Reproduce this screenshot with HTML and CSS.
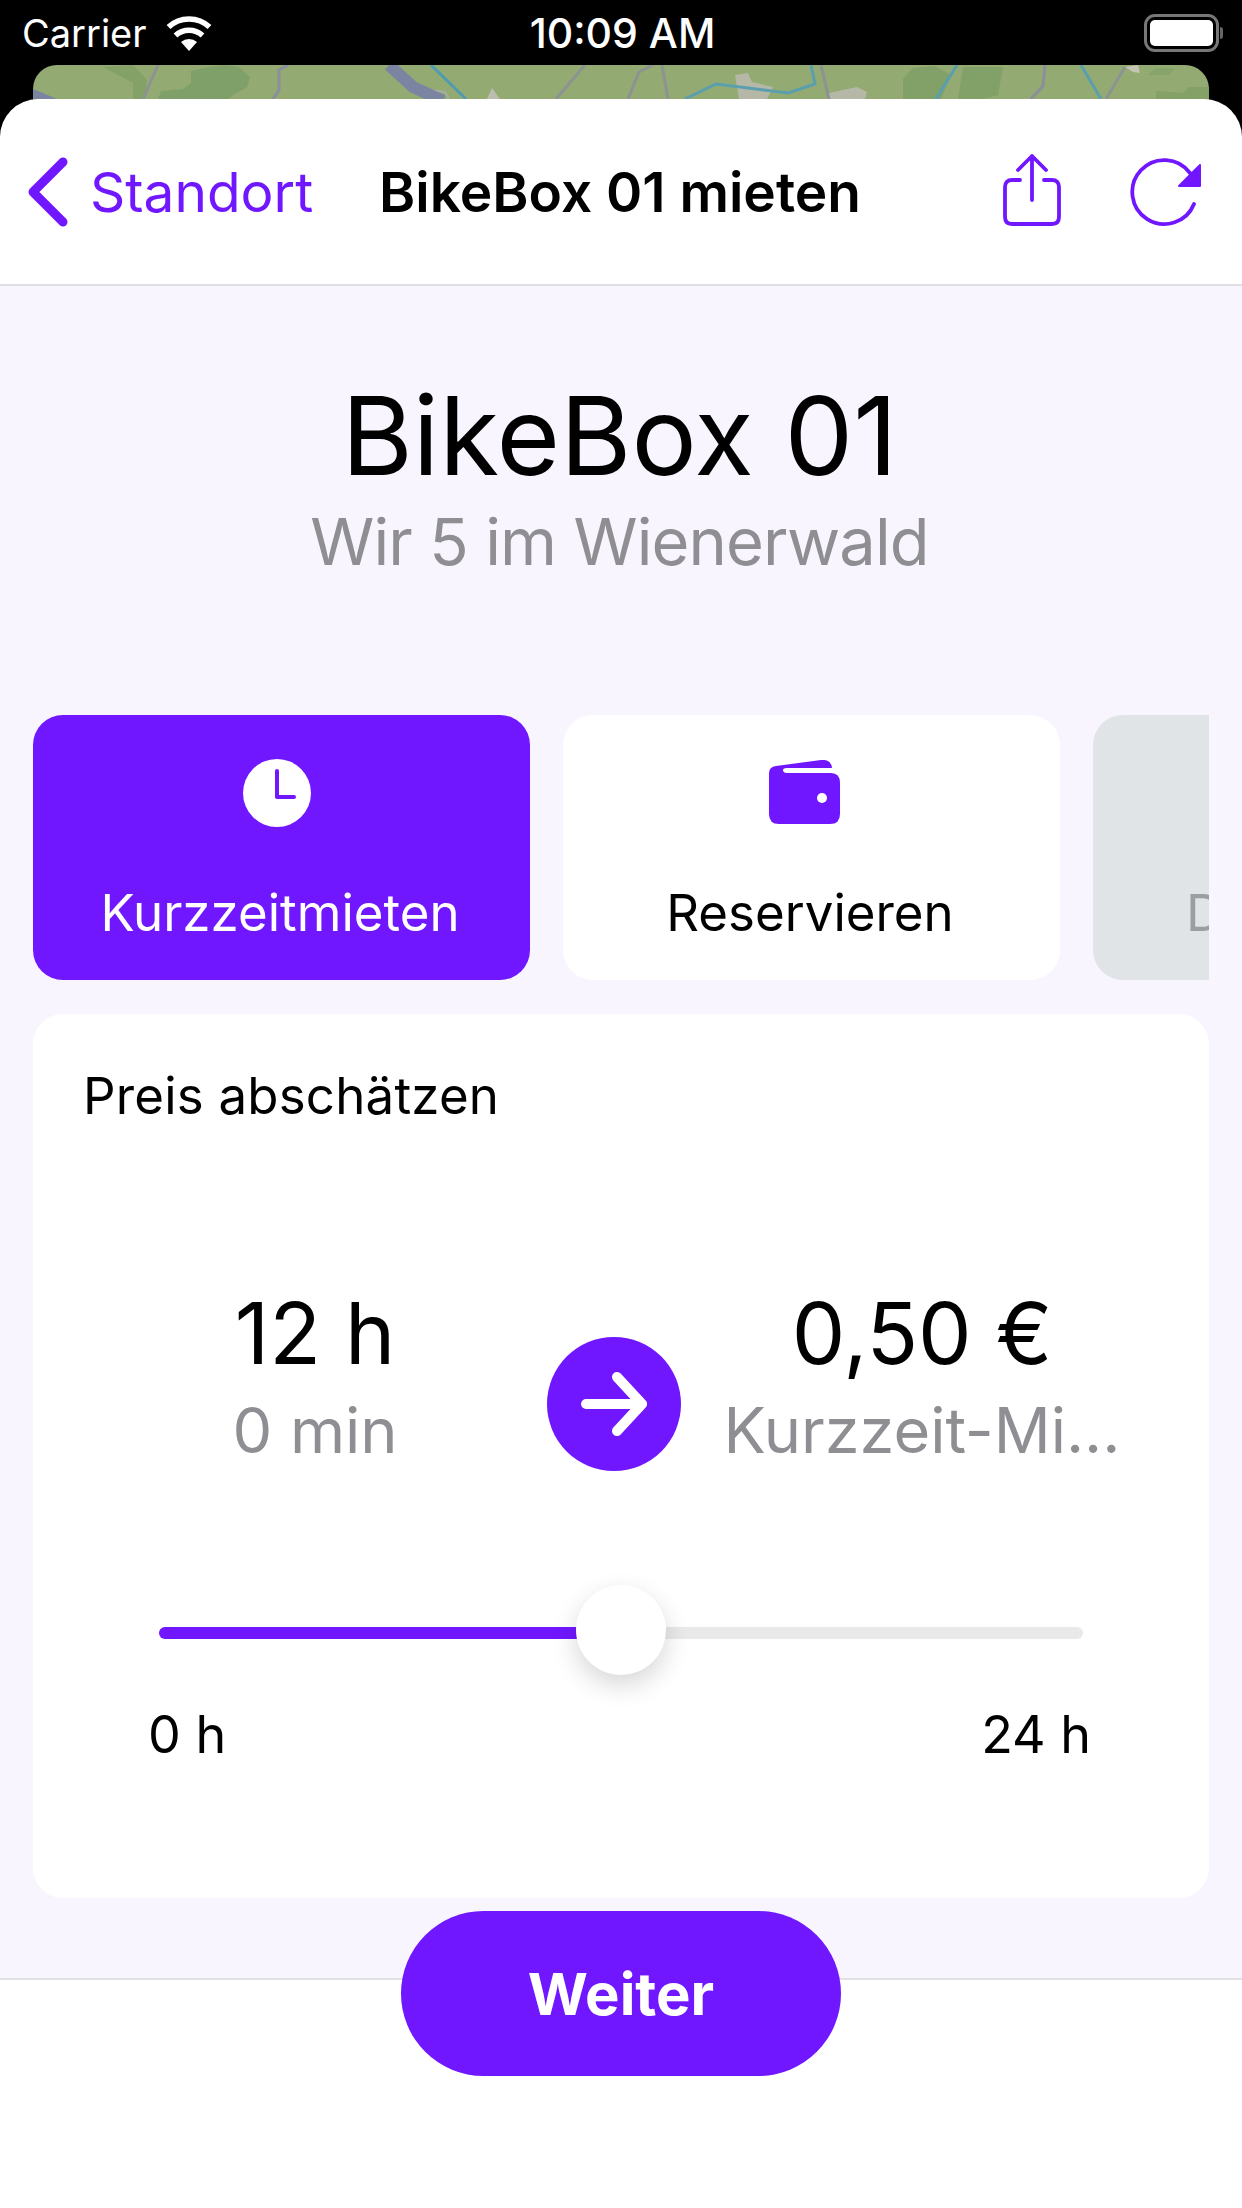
FILE: index.html
```html
<html>
  <head>
    <meta charset="utf-8">
    <meta name="viewport" content="width=device-width, initial-scale=1.0">
    <title>BikeBox 01 mieten</title>
    <link rel="stylesheet" href="styles.css">
  </head>
  <body>
    <div class="status">
      <div class="status-left">
        <span class="carrier">Carrier</span>
        <svg class="wifi" viewBox="0 0 50 38">
          <path d="M25 37 L17 28 A12 12 0 0 1 33 28 Z" fill="#fff"/>
          <path d="M11.500 21.500 A20 20 0 0 1 38.500 21.500" fill="none" stroke="#fff" stroke-width="5.500"/>
          <path d="M4.500 13 A30 30 0 0 1 45.500 13" fill="none" stroke="#fff" stroke-width="5.500"/>
        </svg>
      </div>
      <span class="clock">10:09 AM</span>
      <div class="status-right">
        <div class="battery"><div class="battery-level"></div></div>
        <div class="battery-nub"></div>
      </div>
    </div>

    <!-- map behind the sheet, only the top edge shows -->
    <div class="map">
      <svg viewBox="0 0 1176 54" preserveAspectRatio="none">
        <rect width="1176" height="54" fill="#93aa72"/>
        <path d="M70 2 L100 0 L114 15 L112 34 H100 L100 18 L85 10 Z" fill="#84a268"/>
        <path d="M158 6 L176 2 L192 0 L206 2 L217 12 L214 22 L200 30 L196 34 H125 L128 26 L150 24 L158 18 Z" fill="#80a06a"/>
        <path d="M870 34 L870 14 L880 3 L902 1 L918 10 L908 34 Z" fill="#82a169"/>
        <path d="M925 34 L930 2 H970 L965 30 L950 34 Z" fill="#82a169"/>
        <path d="M1115 10 L1122 3 H1142 L1136 10 Z" fill="#86a46c"/>
        <path d="M1123 34 V26 L1150 28 L1156 22 H1176 V34 Z" fill="#84a268"/>
        <path d="M702 10 L715 8 L719 17 L740 22 L734 34 H706 L704 22 Z" fill="#b5b8a6"/>
        <path d="M796 28 L824 22 L834 27 L832 34 H796 Z" fill="#b5b8a6"/>
        <path d="M454 34 L459 23 L467 34 Z" fill="#bcbdb0"/>
        <path d="M1092 2 L1105 0 L1107 8 L1100 7 Z" fill="#c4c4b4"/>
        <path d="M0 24 L24 34 H0 Z" fill="#7b84a0"/>
        <path d="M125 0 L110 34" stroke="#8c9392" stroke-width="3" fill="none"/>
        <path d="M255 0 L246 5 V25 L240 34" stroke="#8a8f9b" stroke-width="3" fill="none"/>
        <path d="M552 0 L523 34" stroke="#8c9392" stroke-width="3" fill="none"/>
        <path d="M620 0 L606 7 L595 34" stroke="#8c9392" stroke-width="3" fill="none"/>
        <path d="M629 0 L635 34" stroke="#8c9392" stroke-width="3" fill="none"/>
        <path d="M788 0 L796 34" stroke="#8c9392" stroke-width="3" fill="none"/>
        <path d="M1012 0 L1010 21 L998 34" stroke="#8a8f9b" stroke-width="3" fill="none"/>
        <path d="M1092 2 L1073 34" stroke="#8c9392" stroke-width="3" fill="none"/>
        <path d="M395 25 L412 27 L416 34" stroke="#a5aea0" stroke-width="2" fill="none"/>
        <path d="M356 0 L380 22 L410 36" stroke="#7b84a0" stroke-width="12" fill="none"/>
        <path d="M398 0 L433 34" stroke="#4f9bb0" stroke-width="3" fill="none"/>
        <path d="M652 34 L683 19 L755 28 L782 19 L778 0" stroke="#5a9fae" stroke-width="3" fill="none"/>
        <path d="M924 0 L903 34" stroke="#5a9fae" stroke-width="3" fill="none"/>
        <path d="M1048 0 L1068 34" stroke="#5a9fae" stroke-width="3" fill="none"/>
      </svg>
    </div>

    <div class="sheet">
      <div class="nav">
        <div class="nav-back">
          <svg class="chevron" viewBox="0 0 40 70">
            <path d="M35 5 L5 35 L35 65" fill="none" stroke="#7017ff" stroke-width="9" stroke-linecap="round" stroke-linejoin="round"/>
          </svg>
          <span class="nav-back-label">Standort</span>
        </div>
        <div class="nav-title">BikeBox 01 mieten</div>
        <div class="nav-actions">
          <svg class="share" viewBox="0 0 58 74">
            <path d="M17 27 H9 Q2 27 2 34 V64 Q2 71 9 71 H49 Q56 71 56 64 V34 Q56 27 49 27 H41" fill="none" stroke="#7017ff" stroke-width="3.800" stroke-linecap="round"/>
            <path d="M29 47 V3 M15 17 L29 3 L43 17" fill="none" stroke="#7017ff" stroke-width="3.800" stroke-linecap="round" stroke-linejoin="round"/>
          </svg>
          <svg class="refresh" viewBox="0 0 74 72">
            <path d="M61 17 A32 32 0 1 0 65 48" fill="none" stroke="#7017ff" stroke-width="3.800" stroke-linecap="round"/>
            <path d="M50 30 L71 9 V30 Z" fill="#7017ff" stroke="#7017ff" stroke-width="2" stroke-linejoin="round"/>
          </svg>
        </div>
      </div>

      <div class="content">
        <div class="hero">
          <h1 class="hero-title">BikeBox 01</h1>
          <p class="hero-sub">Wir 5 im Wienerwald</p>
        </div>

        <div class="tabs">
          <div class="tab tab-active">
            <svg class="tab-icon tab-icon-clock" viewBox="0 0 68 68">
              <circle cx="34" cy="34" r="34" fill="#fff"/>
              <path d="M34 12 V38 H51" fill="none" stroke="#7017ff" stroke-width="4" stroke-linecap="round" stroke-linejoin="round"/>
            </svg>
            <span class="tab-label">Kurzzeitmieten</span>
          </div>
          <div class="tab">
            <svg class="tab-icon tab-icon-wallet" viewBox="0 0 72 64">
              <path d="M0 13 Q0 7 7 6 L52 0 Q62 -1 63 8 H18 Q14 8 14 10 Q14 13 18 13 H62 Q71 13 71 23 V54 Q71 64 61 64 H10 Q0 64 0 54 Z" fill="#7017ff"/>
              <circle cx="53" cy="38" r="5" fill="#fff"/>
            </svg>
            <span class="tab-label">Reservieren</span>
          </div>
          <div class="tab tab-disabled">
            <span class="tab-label">Dauermieten</span>
          </div>
        </div>

        <div class="card">
          <div class="card-title">Preis abschätzen</div>
          <div class="estimate">
            <div class="estimate-col">
              <div class="estimate-main">12 h</div>
              <div class="estimate-sub">0 min</div>
            </div>
            <div class="arrow-btn">
              <svg viewBox="0 0 66 64">
                <path d="M5 32 H59 M36 5 L61 32 L36 59" fill="none" stroke="#fff" stroke-width="10" stroke-linecap="round" stroke-linejoin="round"/>
              </svg>
            </div>
            <div class="estimate-col">
              <div class="estimate-main">0,50 €</div>
              <div class="estimate-sub">Kurzzeit-Mi...</div>
            </div>
          </div>
          <div class="slider">
            <div class="slider-fill" style="width: 50%"></div>
            <div class="slider-thumb"></div>
          </div>
          <div class="slider-labels">
            <span>0 h</span>
            <span>24 h</span>
          </div>
        </div>
      </div>

      <div class="footer">
        <div class="next-btn">Weiter</div>
      </div>
    </div>
  </body>
</html>
```

FILE: styles.css
```css
body {
  margin: 0;
  width: 1242px;
  height: 2208px;
  overflow: hidden;
  background-color: #000;
  font-family: Inter, "Noto Sans", sans-serif;
  display: flex;
  flex-direction: column;
}

.status {
  height: 65px;
  flex-shrink: 0;
  display: grid;
  grid-template-columns: 1fr auto 1fr;
  align-items: center;
  padding: 0 19px 0 22px;
  color: #fff;
}

.status-left {
  display: flex;
  align-items: center;
  gap: 17px;
}

.carrier {
  font-size: 38px;
}

.wifi {
  width: 50px;
  height: 38px;
}

.clock {
  font-size: 41px;
  font-weight: 500;
}

.status-right {
  display: flex;
  align-items: center;
  justify-content: flex-end;
  gap: 1px;
}

.battery {
  width: 75px;
  height: 38px;
  box-sizing: border-box;
  border: 3px solid #777;
  border-radius: 11px;
  padding: 3px;
}

.battery-level {
  height: 100%;
  background-color: #fff;
  border-radius: 5px;
}

.battery-nub {
  width: 3px;
  height: 12px;
  background-color: #666;
  border-radius: 0 3px 3px 0;
}

.map {
  height: 54px;
  flex-shrink: 0;
  margin: 0 33px;
  border-radius: 24px 24px 0 0;
  overflow: hidden;
}

.map svg {
  display: block;
  width: 100%;
  height: 100%;
}

.sheet {
  position: relative;
  margin-top: -20px;
  flex: 1;
  min-height: 0;
  display: flex;
  flex-direction: column;
  background-color: #fff;
  border-radius: 38px 38px 0 0;
  overflow: hidden;
}

.nav {
  height: 187px;
  flex-shrink: 0;
  box-sizing: border-box;
  border-bottom: 2px solid #dfdfe4;
  display: grid;
  grid-template-columns: 1fr auto 1fr;
  align-items: center;
  padding: 0 39px 0 28px;
}

.nav-back {
  display: flex;
  align-items: center;
  gap: 22px;
  color: #7017ff;
}

.chevron {
  width: 40px;
  height: 70px;
}

.nav-back-label {
  font-size: 55px;
}

.nav-title {
  margin-left: 9px;
  font-size: 55px;
  font-weight: 600;
  color: #000;
}

.nav-actions {
  display: flex;
  align-items: center;
  justify-content: flex-end;
  gap: 68px;
}

.share {
  width: 58px;
  height: 74px;
  margin-bottom: 4px;
}

.refresh {
  width: 74px;
  height: 72px;
}

.content {
  flex-shrink: 0;
  height: 1692px;
  box-sizing: border-box;
  background-color: #f8f5ff;
  padding: 0 33px;
}

.hero {
  padding-top: 89px;
  padding-right: 3px;
  text-align: center;
}

.hero-title {
  margin: 0;
  font-size: 109px;
  font-weight: 375;
  line-height: 120px;
  color: #000;
}

.hero-sub {
  margin: 7px 0 0;
  font-size: 65px;
  letter-spacing: -0.9px;
  line-height: 80px;
  color: #8e8e93;
}

.tabs {
  margin-top: 133px;
  display: flex;
  gap: 33px;
  overflow: hidden;
}

.tab {
  width: 497px;
  height: 265px;
  flex-shrink: 0;
  box-sizing: border-box;
  padding-top: 44px;
  display: flex;
  flex-direction: column;
  align-items: center;
  background-color: #fff;
  border-radius: 30px;
  font-size: 51px;
  line-height: 60px;
  color: #000;
}

.tab-label {
  padding-right: 3px;
}

.tab-icon {
  width: 68px;
  height: 68px;
  margin-bottom: 56px;
}

.tab-icon-clock {
  margin-right: 10px;
}

.tab-icon-wallet {
  width: 72px;
  height: 64px;
  margin: 1px 14px 59px 0;
}

.tab-active {
  background-color: #7017ff;
  color: #fff;
}

.tab-disabled {
  background-color: #e1e4e7;
  color: #9a9ea3;
  padding-top: 168px;
}

.card {
  margin-top: 34px;
  height: 884px;
  box-sizing: border-box;
  padding: 51px 50px 0;
  background-color: #fff;
  border-radius: 30px;
}

.card-title {
  font-size: 51px;
  letter-spacing: 0.2px;
  line-height: 62px;
  color: #000;
}

.estimate {
  margin: 153px -4px 0 0;
  display: grid;
  grid-template-columns: 464px 134px 1fr;
  align-items: start;
}

.estimate-col {
  text-align: center;
}

.estimate-main {
  font-size: 85px;
  line-height: 108px;
  color: #000;
}

.estimate-sub {
  font-size: 63px;
  line-height: 84px;
  color: #8e8e93;
  white-space: nowrap;
}

.arrow-btn {
  width: 134px;
  height: 134px;
  margin-top: 57px;
  border-radius: 50%;
  background-color: #7017ff;
  display: flex;
  align-items: center;
  justify-content: center;
}

.arrow-btn svg {
  width: 66px;
  height: 64px;
}

.slider {
  position: relative;
  margin: 155px 76px 0;
  height: 12px;
  border-radius: 6px;
  background-color: #e9e9e9;
}

.slider-fill {
  height: 100%;
  border-radius: 6px;
  background-color: #7017ff;
}

.slider-thumb {
  position: absolute;
  left: 50%;
  top: -42px;
  width: 90px;
  height: 90px;
  margin-left: -45px;
  border-radius: 50%;
  background-color: #fff;
  box-shadow: 0 10px 26px rgba(0, 0, 0, 0.16);
}

.slider-labels {
  margin: 65px 68px 0 65px;
  display: flex;
  justify-content: space-between;
  font-size: 52px;
  line-height: 62px;
  color: #000;
}

.footer {
  flex: 1;
  display: flex;
  justify-content: center;
  background-color: #fff;
  border-top: 2px solid #e2e2e4;
}

.next-btn {
  width: 440px;
  height: 165px;
  margin-top: -69px;
  border-radius: 83px;
  background-color: #7017ff;
  color: #fff;
  font-size: 58px;
  font-weight: 700;
  display: flex;
  align-items: center;
  justify-content: center;
  position: relative;
}
```
